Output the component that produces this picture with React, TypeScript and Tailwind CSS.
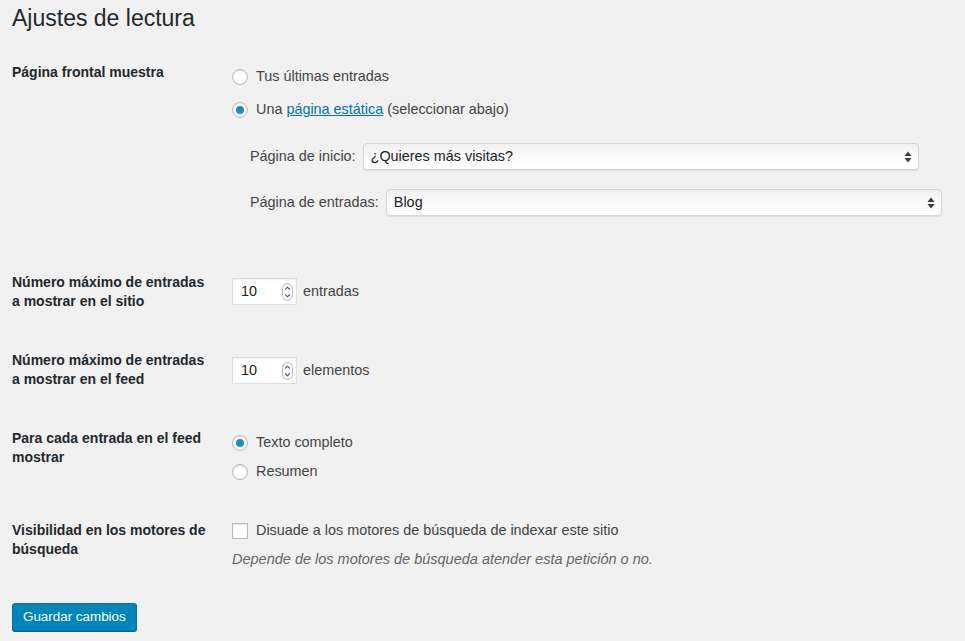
import React from "react";

const font = { fontFamily: '"Liberation Sans", Arial, sans-serif' };

const Radio = ({ checked }: { checked?: boolean }) => (
  <span className="inline-flex h-4 w-4 shrink-0 items-center justify-center rounded-full border border-[#b4b9be] bg-white shadow-[inset_0_1px_2px_rgba(0,0,0,0.1)]">
    {checked && <span className="h-2 w-2 rounded-full bg-[#1e8cbe]" />}
  </span>
);

const SelectArrows = () => (
  <svg width="8" height="12" viewBox="0 0 8 12" className="shrink-0">
    <path d="M4 0.5 L7.5 5 L0.5 5 Z" fill="#3c3c3c" />
    <path d="M4 11.5 L7.5 7 L0.5 7 Z" fill="#3c3c3c" />
  </svg>
);

const FakeSelect = ({ value }: { value: string }) => (
  <div className="flex h-[27px] w-[556px] items-center justify-between rounded-[4px] border border-[#d6d6d6] bg-gradient-to-b from-[#f0f0f0] via-[#fafafa] to-[#ffffff] pl-[7px] pr-[6px] text-[14.4px] text-[#222] shadow-[0_1px_1px_rgba(0,0,0,0.08)]">
    <span>{value}</span>
    <SelectArrows />
  </div>
);

const NumberInput = ({ value }: { value: string }) => (
  <div className="flex h-[27px] w-[65px] items-center justify-between border border-[#dddddd] bg-white pl-[8px] pr-[3px] text-[14.4px] text-[#222] shadow-[inset_0_1px_2px_rgba(0,0,0,0.07)]">
    <span>{value}</span>
    <svg width="11" height="18" viewBox="0 0 11 18">
      <rect x="0.5" y="0.5" width="10" height="17" rx="5" fill="#fff" stroke="#b8b8b8" />
      <path d="M3.2 6.5 L5.5 4.2 L7.8 6.5" fill="none" stroke="#555" strokeWidth="1.1" />
      <path d="M3.2 11.5 L5.5 13.8 L7.8 11.5" fill="none" stroke="#555" strokeWidth="1.1" />
    </svg>
  </div>
);

const Label = ({ children }: { children: React.ReactNode }) => (
  <div className="w-[220px] shrink-0 pr-[10px] pt-[20px] text-[14px] font-bold leading-[19px] text-[#23282d]">
    {children}
  </div>
);

export default function App() {
  return (
    <div style={font} className="min-h-[641px] w-full bg-[#f1f1f1] pl-[12px] text-[14.4px] text-[#444]">
      <div className="h-[43px] pt-[4px] text-[23px] leading-[29px] text-[#23282d]">Ajustes de lectura</div>

      <div className="flex h-[210px]">
        <div className="w-[220px] shrink-0 pt-[20px] text-[14px] font-bold leading-[18px] text-[#23282d]">
          Página frontal muestra
        </div>
        <div className="pt-[24px]">
          <div className="flex h-[20px] items-center gap-[8px]">
            <Radio />
            <span>Tus últimas entradas</span>
          </div>
          <div className="mt-[13px] flex h-[20px] items-center gap-[8px]">
            <Radio checked />
            <span>
              Una{" "}
              <a href="#" className="text-[#0073aa] underline">
                página estática
              </a>{" "}
              (seleccionar abajo)
            </span>
          </div>
          <div className="mt-[23px] flex flex-col gap-[19px] pl-[18px]">
            <div className="flex items-center gap-[7px]">
              <span>Página de inicio:</span>
              <FakeSelect value="¿Quieres más visitas?" />
            </div>
            <div className="flex items-center gap-[7px]">
              <span>Página de entradas:</span>
              <FakeSelect value="Blog" />
            </div>
          </div>
        </div>
      </div>

      <div className="flex h-[78px]">
        <Label>
          Número máximo de entradas
          <br />a mostrar en el sitio
        </Label>
        <div className="flex items-start gap-[6px] pt-[25px]">
          <NumberInput value="10" />
          <span className="leading-[27px]">entradas</span>
        </div>
      </div>

      <div className="flex h-[78px]">
        <Label>
          Número máximo de entradas
          <br />a mostrar en el feed
        </Label>
        <div className="flex items-start gap-[6px] pt-[26px]">
          <NumberInput value="10" />
          <span className="leading-[27px]">elementos</span>
        </div>
      </div>

      <div className="flex h-[92px]">
        <Label>
          Para cada entrada en el feed
          <br />
          mostrar
        </Label>
        <div className="pt-[24px]">
          <div className="flex h-[20px] items-center gap-[8px]">
            <Radio checked />
            <span>Texto completo</span>
          </div>
          <div className="mt-[9px] flex h-[20px] items-center gap-[8px]">
            <Radio />
            <span>Resumen</span>
          </div>
        </div>
      </div>

      <div className="flex h-[67px]">
        <Label>
          Visibilidad en los motores de
          <br />
          búsqueda
        </Label>
        <div className="pt-[20px]">
          <div className="flex h-[20px] items-center gap-[8px]">
            <span className="h-4 w-4 shrink-0 border border-[#b4b9be] bg-white shadow-[inset_0_1px_2px_rgba(0,0,0,0.1)]" />
            <span>Disuade a los motores de búsqueda de indexar este sitio</span>
          </div>
          <div className="mt-[8px] text-[14.5px] italic leading-[20px] text-[#666]">
            Depende de los motores de búsqueda atender esta petición o no.
          </div>
        </div>
      </div>

      <div className="pt-[35px]">
        <button className="h-[28px] rounded-[3px] border border-[#0073aa] bg-[#0085ba] px-[10px] text-[13.4px] leading-[26px] text-white shadow-[0_1px_0_#006799]">
          Guardar cambios
        </button>
      </div>
    </div>
  );
}
